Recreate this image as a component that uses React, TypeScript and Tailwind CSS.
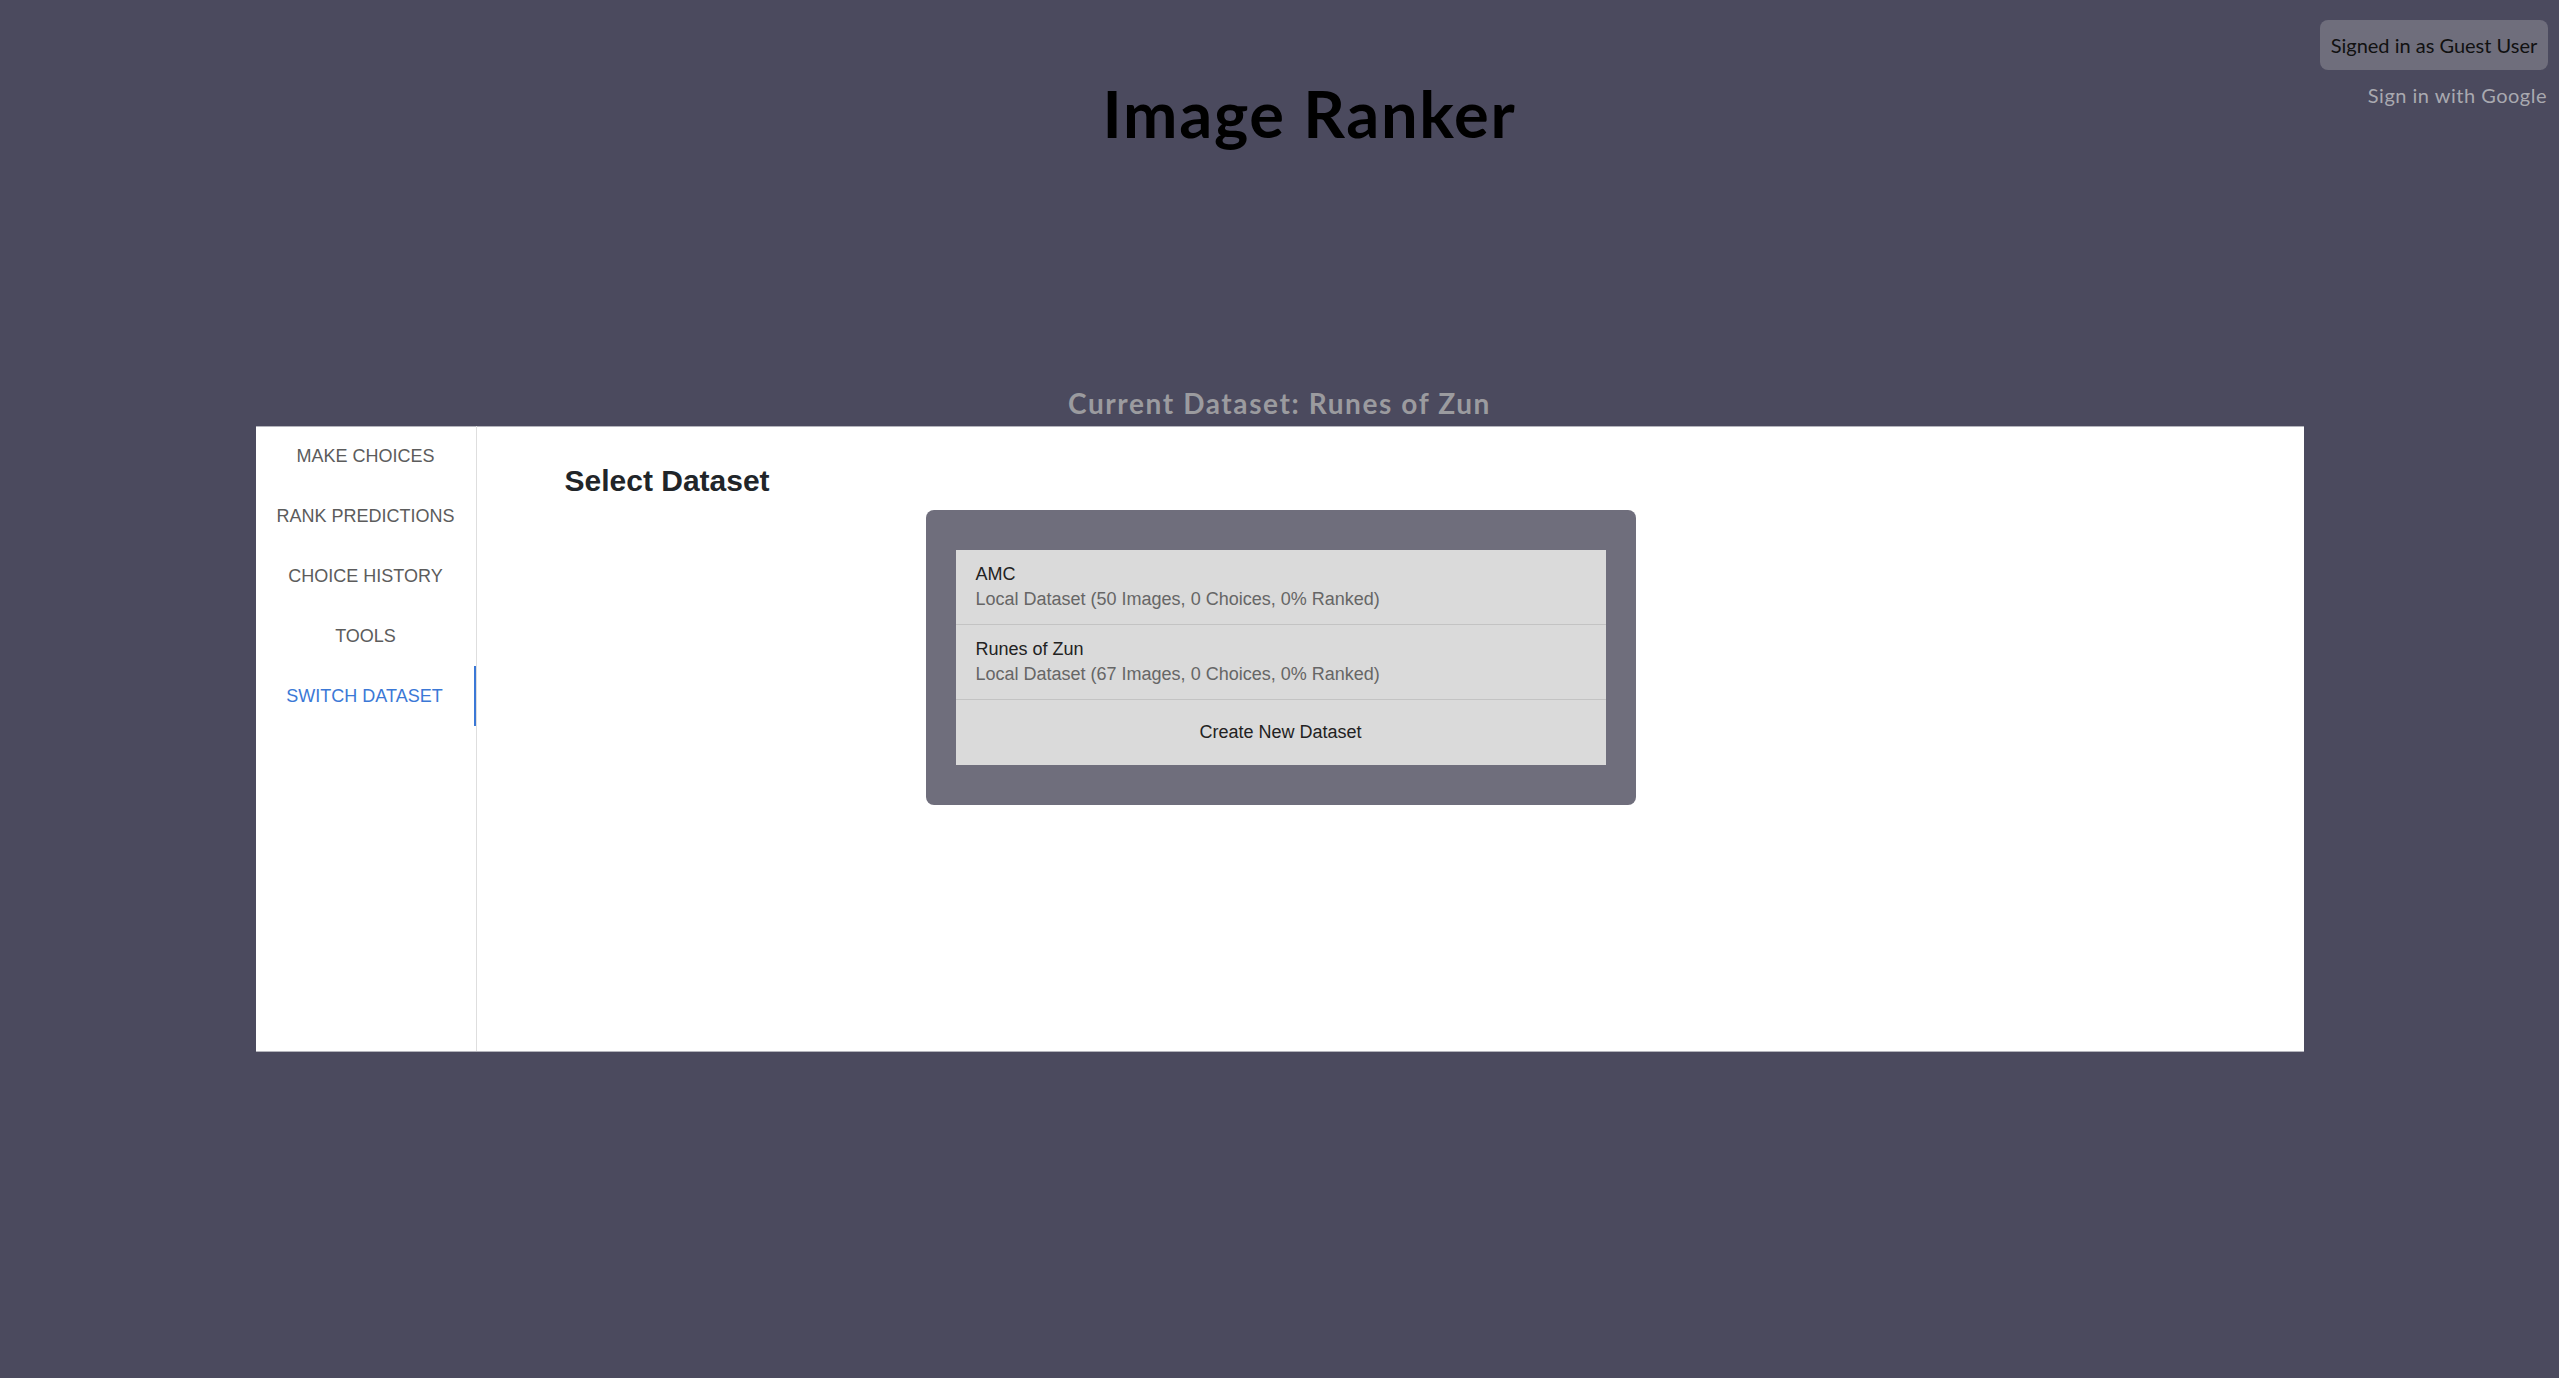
import { useState } from "react";

type Dataset = {
  name: string;
  images: number;
  choices: number;
  ranked: number;
};

const navItems = [
  "MAKE CHOICES",
  "RANK PREDICTIONS",
  "CHOICE HISTORY",
  "TOOLS",
  "SWITCH DATASET",
];

const datasets: Dataset[] = [
  { name: "AMC", images: 50, choices: 0, ranked: 0 },
  { name: "Runes of Zun", images: 67, choices: 0, ranked: 0 },
];

export default function App() {
  const [active, setActive] = useState("SWITCH DATASET");

  return (
    <div className="relative min-h-screen overflow-hidden bg-[#4b4a5e] font-['Lato','Open_Sans',sans-serif]">
      <div className="absolute right-[11px] top-[20px] flex flex-col items-end">
        <div className="flex h-[50px] w-[228px] items-center justify-center rounded-lg bg-[#6f6e7c] text-[20px] text-[#111]">
          Signed in as Guest User
        </div>
        <a className="mt-[12px] mr-px text-[20px] leading-[26px] tracking-[0.5px] text-[#a9a9b0]">
          Sign in with Google
        </a>
      </div>

      <h1 className="pl-[60px] pt-[81px] text-center text-[65px] font-bold leading-none tracking-[1.7px] text-black">
        Image Ranker
      </h1>

      <p className="mt-[243px] text-center text-[28px] font-bold leading-none tracking-[1.6px] text-[#9b9b9f]">
        Current Dataset: Runes of Zun
      </p>

      <div className="mx-auto mt-[9px] flex h-[626px] w-[2048px] border-y border-[#b4b4bc] bg-white font-['Liberation_Sans',Arial,sans-serif]">
        <nav className="-mt-px w-[221px] shrink-0 border-r border-[#dedede]">
          {navItems.map((item) => (
            <button
              key={item}
              onClick={() => setActive(item)}
              className={
                item === active
                  ? "flex h-[60px] w-full items-center justify-center border-r-2 border-[#3b78d6] text-[18px] text-[#3b78d6]"
                  : "flex h-[60px] w-full items-center justify-center text-[18px] text-[#5c5c5c]"
              }
            >
              {item}
            </button>
          ))}
        </nav>

        <main className="flex-1 pl-[88px] pt-[36px]">
          <h2 className="text-[30px] font-bold leading-[36px] text-[#212529]">
            Select Dataset
          </h2>

          <div className="ml-[361px] mt-[11px] w-[710px] rounded-lg bg-[#6f6e7c] px-[30px] py-[40px]">
            <div className="bg-[#dadada]">
              {datasets.map((d) => (
                <div
                  key={d.name}
                  className="border-b border-[#c3c3c3] px-[20px] py-[12px] text-[18px] leading-[25px]"
                >
                  <div className="text-[#222]">{d.name}</div>
                  <div className="text-[#666]">
                    Local Dataset ({d.images} Images, {d.choices} Choices,{" "}
                    {d.ranked}% Ranked)
                  </div>
                </div>
              ))}
              <div className="py-[20px] text-center text-[18px] leading-[25px] text-[#222]">
                Create New Dataset
              </div>
            </div>
          </div>
        </main>
      </div>
    </div>
  );
}
